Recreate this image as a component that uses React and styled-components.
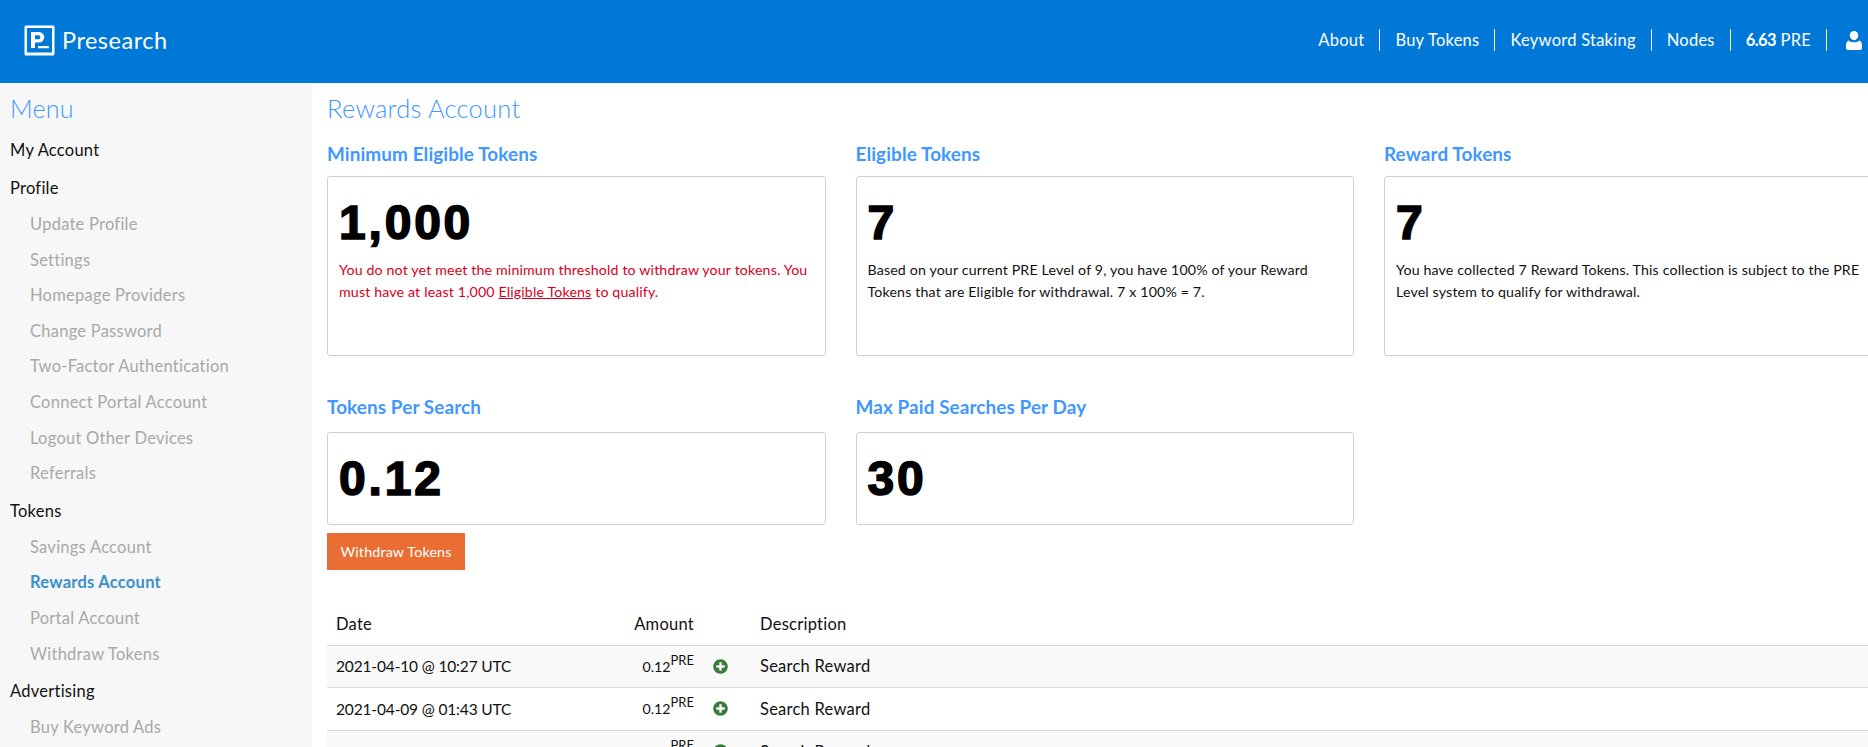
import React from "react";
import styled, { createGlobalStyle } from "styled-components";
import { FaPlusCircle } from "react-icons/fa";

const GlobalStyle = createGlobalStyle`
html, body {
  margin: 0;
  height: 747px;
  overflow: hidden;
  background: #fff;
  color: #111;
  font-family: Lato, "Open Sans", sans-serif;
  font-size: 16.5px;
  letter-spacing: 0.25px;
}
* { box-sizing: border-box; }
`;

const Header = styled.header`
height: 83px;
background: #0078d7;
color: #fff;
display: flex;
align-items: center;
padding: 0 6px 3px 24px;
`;

const Brand = styled.div`
display: flex;
align-items: center;
gap: 7px;
font-size: 23.5px;
letter-spacing: 0.5px;
`;

const Nav = styled.nav`
margin-left: auto;
display: flex;
align-items: center;
`;

const NavItem = styled.a`
height: 22px;
line-height: 22px;
padding: 0 15px;
border-right: 1px solid #fff;
display: flex;
align-items: center;
white-space: pre;
b { font-weight: 700; letter-spacing: -0.6px; }
&:last-child { border-right: none; padding-right: 0; padding-left: 19px; }
`;

const Layout = styled.div`
display: grid;
grid-template-columns: 312px 1fr;
height: 664px;
`;

const Sidebar = styled.aside`
background: #f7f7f7;
padding: 9px 10px 0;
overflow: hidden;
`;

const MenuTitle = styled.h2`
margin: 0 0 7px;
font-size: 25px;
line-height: 32px;
font-weight: 300;
color: #3f97ff;
`;

const TopLink = styled.div`
height: 38px;
line-height: 38px;
color: #111;
`;

const SubLink = styled.div`
height: 35.6px;
line-height: 35.6px;
padding-left: 20px;
color: ${(p) => (p.$active ? "#3a90c8" : "#a8a8a8")};
font-weight: ${(p) => (p.$active ? 700 : 400)};
`;

const Main = styled.main`
padding: 9px 0 0 15px;
overflow: hidden;
min-width: 0;
`;

const PageTitle = styled.h1`
margin: 0 0 18px;
font-size: 25.5px;
line-height: 32px;
font-weight: 300;
color: #3f97ff;
`;

const StatGrid = styled.div`
display: grid;
grid-template-columns: repeat(3, 498.5px);
column-gap: 30px;
row-gap: 39px;
`;

const StatTitle = styled.h3`
margin: 0 0 ${(p) => (p.$low ? "13px" : "10px")};
font-size: 18.9px;
line-height: 24px;
font-weight: 700;
color: #3f97ff;
letter-spacing: 0.1px;
`;

const Card = styled.div`
height: ${(p) => (p.$tall ? "180px" : "93px")};
border: 1px solid #cfcfcf;
border-radius: 3px;
padding: 10px 11px;
background: #fff;
`;

const Big = styled.div`
height: 72px;
line-height: 72px;
font-family: "Liberation Sans", Arial, sans-serif;
font-size: 48px;
font-weight: 700;
letter-spacing: 2.8px;
color: #000;
-webkit-text-stroke: 1.6px #000;
`;

const Note = styled.p`
margin: 0;
font-size: 14.2px;
line-height: 22px;
letter-spacing: 0.15px;
color: ${(p) => (p.$error ? "#d9001b" : "#111")};
a { color: inherit; text-decoration: underline; }
`;

const WithdrawButton = styled.button`
display: block;
margin-top: 8px;
width: 138px;
height: 37px;
padding: 0;
border: none;
background: #ea6e33;
color: #fff;
font: inherit;
font-size: 14.2px;
letter-spacing: 0.2px;
`;

const Table = styled.table`
margin-top: 32px;
width: 1600px;
border-collapse: collapse;
table-layout: fixed;
`;

const Th = styled.th`
height: 43px;
padding: 2px 8px 0 ${(p) => (p.$right ? "8px" : "9px")};
font-weight: 400;
white-space: nowrap;
text-align: ${(p) => (p.$right ? "right" : "left")};
`;

const Row = styled.tr`
background: ${(p) => (p.$odd ? "#f9f9f9" : "#fff")};
border-top: 1px solid #d9d9d9;
`;

const Td = styled.td`
height: 42.5px;
padding: 0 8px 0 9px;
white-space: nowrap;
`;

const DateCell = styled(Td)`
font-size: 15.5px;
letter-spacing: -0.15px;
`;

const AmountCell = styled(Td)`
padding-left: 0;
text-align: right;
font-size: 14.2px;
letter-spacing: 0;
sup { font-size: 13px; line-height: 0; vertical-align: 7px; }
`;

const IconCell = styled(Td)`
padding-left: 11px;
svg { display: block; color: #3a7a3a; }
`;

function Logo() {
  return (
    <svg width="31" height="31" viewBox="0 0 31 31">
      <rect x="0.5" y="0.5" width="30" height="30" rx="1.5" fill="#fff" />
      <rect x="3" y="3" width="25" height="24.5" fill="#0078d7" />
      <path d="M7 7h8a5 5 0 0 1 0 10.5h-4V23H7zM11 10.3v4h3.4a2 2 0 0 0 0-4zM14 21h11v2.2H14z" fill="#fff" fillRule="evenodd" />
    </svg>
  );
}

function UserIcon() {
  return (
    <svg width="16" height="19" viewBox="0 0 16 19" fill="#fff">
      <ellipse cx="8" cy="4.6" rx="4.2" ry="4.6" />
      <path d="M2.6 9.4c1.4 1.2 3.4 1.9 5.4 1.9s4-.7 5.4-1.9c1.6.6 2.6 2.4 2.6 4.6v3c0 1.2-.9 2-2 2H2c-1.1 0-2-.8-2-2v-3c0-2.2 1-4 2.6-4.6z" />
    </svg>
  );
}

const rows = [
  ["2021-04-10 @ 10:27 UTC", "0.12"],
  ["2021-04-09 @ 01:43 UTC", "0.12"],
  ["2021-04-08 @ 06:12 UTC", "0.12"],
];

export default function App() {
  return (
    <>
      <GlobalStyle />
      <Header>
        <Brand>
          <Logo />
          Presearch
        </Brand>
        <Nav>
          <NavItem>About</NavItem>
          <NavItem>Buy Tokens</NavItem>
          <NavItem>Keyword Staking</NavItem>
          <NavItem>Nodes</NavItem>
          <NavItem><b>6.63</b> PRE</NavItem>
          <NavItem><UserIcon /></NavItem>
        </Nav>
      </Header>
      <Layout>
        <Sidebar>
          <MenuTitle>Menu</MenuTitle>
          <TopLink>My Account</TopLink>
          <TopLink>Profile</TopLink>
          <SubLink>Update Profile</SubLink>
          <SubLink>Settings</SubLink>
          <SubLink>Homepage Providers</SubLink>
          <SubLink>Change Password</SubLink>
          <SubLink>Two-Factor Authentication</SubLink>
          <SubLink>Connect Portal Account</SubLink>
          <SubLink>Logout Other Devices</SubLink>
          <SubLink>Referrals</SubLink>
          <TopLink>Tokens</TopLink>
          <SubLink>Savings Account</SubLink>
          <SubLink $active>Rewards Account</SubLink>
          <SubLink>Portal Account</SubLink>
          <SubLink>Withdraw Tokens</SubLink>
          <TopLink>Advertising</TopLink>
          <SubLink>Buy Keyword Ads</SubLink>
        </Sidebar>
        <Main>
          <PageTitle>Rewards Account</PageTitle>
          <StatGrid>
            <div>
              <StatTitle>Minimum Eligible Tokens</StatTitle>
              <Card $tall>
                <Big>1,000</Big>
                <Note $error>
                  You do not yet meet the minimum threshold to withdraw your tokens. You must have at least 1,000 <a>Eligible Tokens</a> to qualify.
                </Note>
              </Card>
            </div>
            <div>
              <StatTitle>Eligible Tokens</StatTitle>
              <Card $tall>
                <Big>7</Big>
                <Note>
                  Based on your current PRE Level of 9, you have 100% of your Reward Tokens that are Eligible for withdrawal. 7 x 100% = 7.
                </Note>
              </Card>
            </div>
            <div>
              <StatTitle>Reward Tokens</StatTitle>
              <Card $tall>
                <Big>7</Big>
                <Note>
                  You have collected 7 Reward Tokens. This collection is subject to the PRE Level system to qualify for withdrawal.
                </Note>
              </Card>
            </div>
            <div>
              <StatTitle $low>Tokens Per Search</StatTitle>
              <Card>
                <Big>0.12</Big>
              </Card>
            </div>
            <div>
              <StatTitle $low>Max Paid Searches Per Day</StatTitle>
              <Card>
                <Big>30</Big>
              </Card>
            </div>
          </StatGrid>
          <WithdrawButton>Withdraw Tokens</WithdrawButton>
          <Table>
            <colgroup>
              <col width="285" />
              <col width="90" />
              <col width="49" />
              <col />
            </colgroup>
            <thead>
              <tr>
                <Th>Date</Th>
                <Th $right>Amount</Th>
                <Th />
                <Th>Description</Th>
              </tr>
            </thead>
            <tbody>
              {rows.map(([date, amount], i) => (
                <Row key={date} $odd={i % 2 === 0}>
                  <DateCell>{date}</DateCell>
                  <AmountCell>{amount}<sup>PRE</sup></AmountCell>
                  <IconCell><FaPlusCircle size={15} /></IconCell>
                  <Td>Search Reward</Td>
                </Row>
              ))}
            </tbody>
          </Table>
        </Main>
      </Layout>
    </>
  );
}
